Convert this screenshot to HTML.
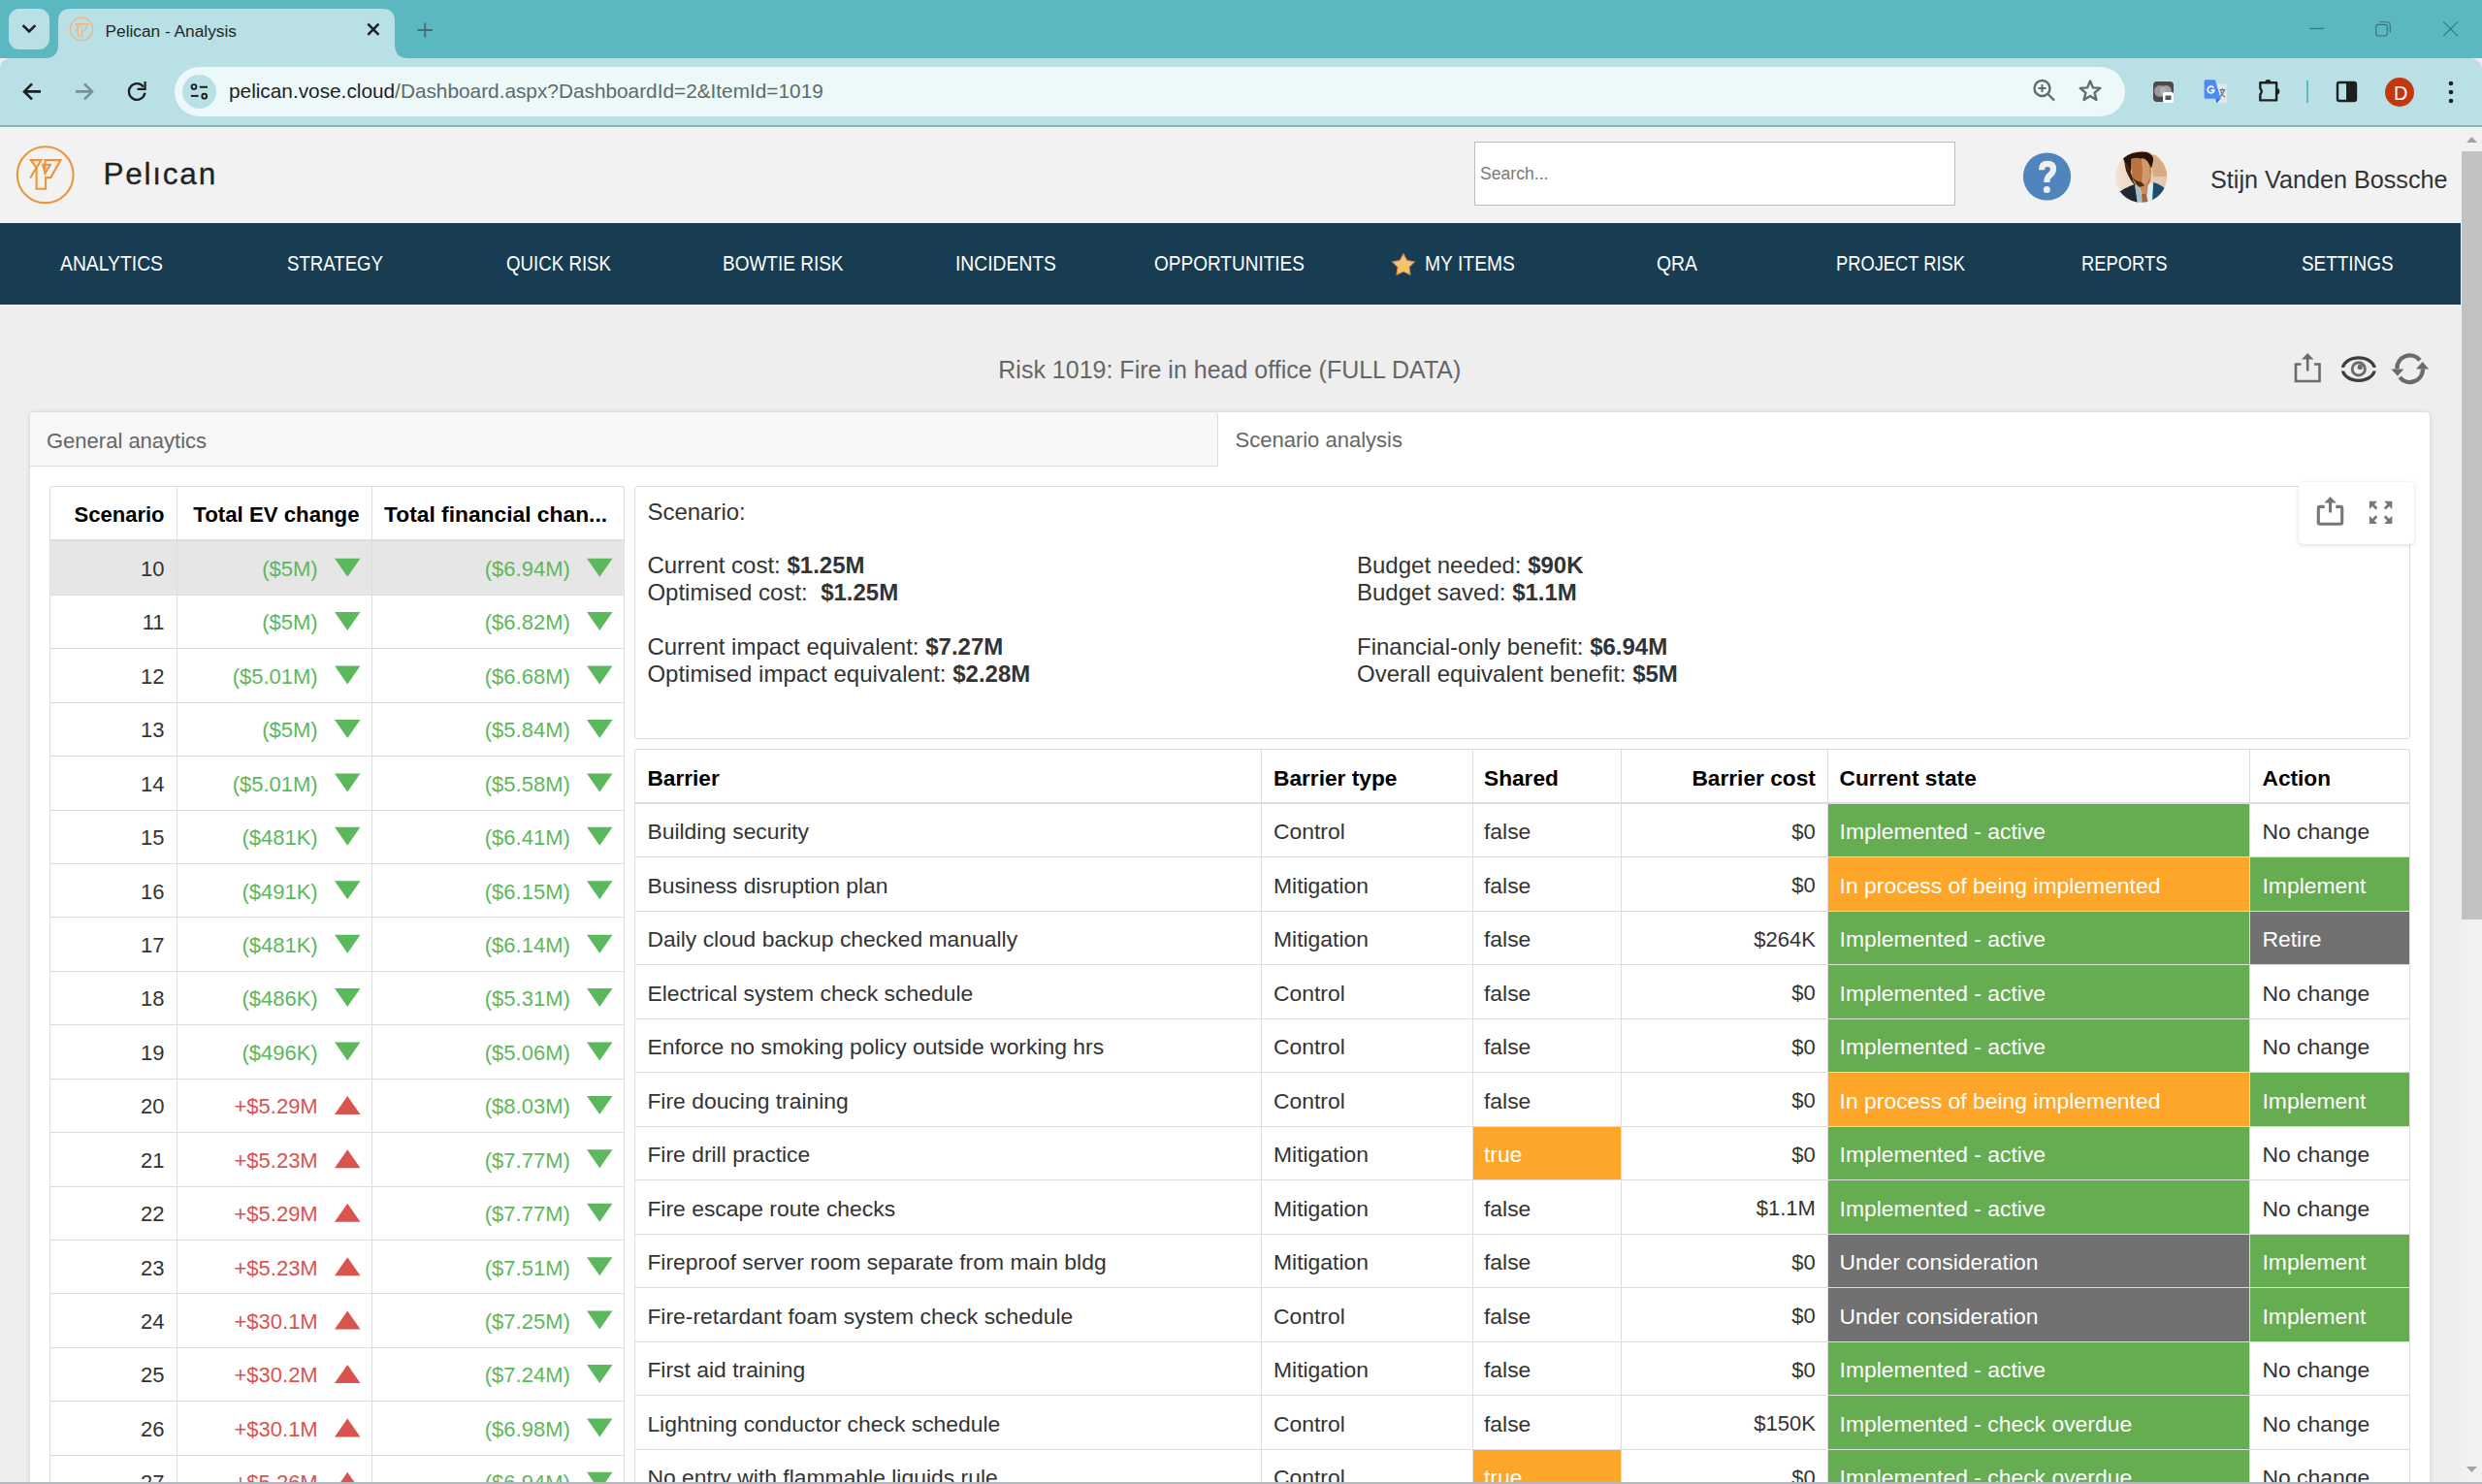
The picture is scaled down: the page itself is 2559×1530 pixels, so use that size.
<!DOCTYPE html>
<html><head><meta charset="utf-8">
<style>
*{box-sizing:border-box;margin:0;padding:0}
html,body{width:2559px;height:1530px;overflow:hidden;background:#eeeeee;font-family:"Liberation Sans",sans-serif;position:relative}
.a{position:absolute}
.t{position:absolute;white-space:pre;line-height:1}
#frame{left:0;top:0;width:2559px;height:60px;background:#5bb8c1}
#toolbar{left:0;top:60px;width:2559px;height:69px;background:#b9e1e5;border-radius:10px 12px 0 0}
#tbborder{left:0;top:129px;width:2559px;height:2px;background:#8fb1b4}
#omni{left:180px;top:69px;width:2011px;height:51px;background:#edf8f8;border-radius:26px}
#header{left:0;top:131px;width:2537px;height:99px;background:#f2f2f2}
#nav{left:0;top:230px;width:2537px;height:84px;background:#183d52}
.nav{color:#fff;font-size:21px;top:262px;transform-origin:0 0}
#sbar{left:2537px;top:131px;width:22px;height:1397px;background:#f1f1f1}
#thumb{left:2538px;top:156px;width:21px;height:792px;background:#c1c1c1}
#bottomline{left:0;top:1528px;width:2559px;height:2px;background:#a3adb0}
</style></head><body>
<div class="a" id="frame"></div>
<!-- tab search button -->
<div class="a" style="left:9px;top:9px;width:42px;height:42px;border-radius:11px;background:#b9e1e5"></div>
<svg class="a" style="left:0;top:0" width="460" height="62">
  <path d="M24.5 27 L30 32.5 L35.5 27" fill="none" stroke="#1f1f1f" stroke-width="2.6" stroke-linecap="square"/>
  <path d="M46 60 Q60 60 60 46 L60 22 Q60 9 73 9 L394 9 Q407 9 407 22 L407 46 Q407 60 421 60 Z" fill="#b9e1e5"/>
  <path d="M379.3 24.6 L390.5 35.8 M390.5 24.6 L379.3 35.8" stroke="#1f1f1f" stroke-width="2.5"/>
  <path d="M438.2 23.4 L438.2 38.6 M430.6 31 L445.8 31" stroke="#3f6e74" stroke-width="1.9"/>
</svg>
<div class="t" style="left:108.5px;top:24.3px;font-size:17.3px;color:#262626">Pelican - Analysis</div>
<!-- window controls -->
<svg class="a" style="left:2370px;top:15px" width="180" height="30">
  <path d="M11 14.4 L26 14.4" stroke="#3a7177" stroke-width="1.1"/>
  <rect x="79.7" y="10.4" width="11.6" height="11.6" rx="2.4" fill="none" stroke="#3a7177" stroke-width="1.1"/>
  <path d="M83.3 7.7 H90.5 Q94.3 7.7 94.3 11.5 V18.7" fill="none" stroke="#3a7177" stroke-width="1.1"/>
  <path d="M149.2 7.4 L164 22.2 M164 7.4 L149.2 22.2" stroke="#3a7177" stroke-width="1.1"/>
</svg>
<div class="a" id="toolbar"></div>
<div class="a" id="tbborder"></div>
<!-- nav buttons -->
<svg class="a" style="left:0;top:60px" width="180" height="70">
  <path d="M42 34.4 H25 M33 26.4 L25 34.4 L33 42.4" fill="none" stroke="#1f1f1f" stroke-width="2.6"/>
  <path d="M78 34.4 H95 M87 26.4 L95 34.4 L87 42.4" fill="none" stroke="#7b9096" stroke-width="2.6"/>
  <path d="M147.9 29.6 A8.3 8.3 0 1 0 149.4 35.8" fill="none" stroke="#1f1f1f" stroke-width="2.3"/>
  <path d="M142.6 31.8 H149.6 V25" fill="none" stroke="#1f1f1f" stroke-width="2.2" stroke-linecap="square"/>
</svg>
<div class="a" id="omni"></div>
<div class="a" style="left:187.9px;top:76.9px;width:35.3px;height:35.3px;border-radius:18px;background:#b9e1e5"></div>
<svg class="a" style="left:187px;top:76px" width="36" height="36">
  <circle cx="13" cy="13.5" r="2.4" fill="none" stroke="#1f1f1f" stroke-width="1.9"/>
  <path d="M18.8 13.75 H27" stroke="#1f1f1f" stroke-width="2"/>
  <circle cx="23.7" cy="23.2" r="2.4" fill="none" stroke="#1f1f1f" stroke-width="1.9"/>
  <path d="M9.9 22.9 H17.6" stroke="#1f1f1f" stroke-width="2"/>
</svg>
<div class="t" style="left:236px;top:84px;font-size:20.8px;color:#1f1f1f">pelican.vose.cloud<span style="color:#5a6b6e">/Dashboard.aspx?DashboardId=2&amp;ItemId=1019</span></div>

<!-- tab favicon -->
<svg class="a" style="left:70px;top:16px" width="28" height="28">
<g fill="none" stroke="#f0b27a" stroke-width="1.2">
<circle cx="14" cy="14" r="11.6"/>
<path d="M8 8.5 H12.5 L10.3 11.8 Z M10.3 11.8 L7.5 16.5 M10.3 11.8 V21 H14.5 V16 H16.6 L21 8.5 H14 V14.5"/>
</g></svg>
<!-- omnibox right icons -->
<svg class="a" style="left:2090px;top:76px" width="90" height="36">
<g fill="none" stroke="#5f6b6d" stroke-width="2.4">
<circle cx="15.5" cy="15" r="8"/>
<path d="M21.5 21 L28 27.5"/>
<path d="M15.5 11 V19 M11.5 15 H19.5" stroke-width="2"/>
<path d="M65 7.5 L67.9 14.4 L75.3 14.9 L69.6 19.6 L71.4 26.9 L65 22.9 L58.6 26.9 L60.4 19.6 L54.7 14.9 L62.1 14.4 Z" stroke-linejoin="round"/>
</g></svg>
<!-- extensions -->
<svg class="a" style="left:2210px;top:74px" width="350" height="42">
<rect x="10" y="10" width="21" height="21" rx="4" fill="#4a4a4a"/>
<circle cx="17" cy="20" r="6" fill="#9a9a9a"/><circle cx="23" cy="20" r="6" fill="#b5b5b5" opacity="0.8"/>
<rect x="20" y="21" width="11" height="11" rx="2" fill="#fff"/>
<path d="M22.5 24.5 H28.5 V29 H22.5 Z" fill="#555"/>
<rect x="75.6" y="12.8" width="10.3" height="19.5" rx="1" fill="#e6e6e6"/>
<path d="M64.2 8.3 H73.9 L79.7 27.8 H64.2 Q62.6 27.8 62.6 26.2 V9.9 Q62.6 8.3 64.2 8.3 Z" fill="#4c8bf5"/>
<path d="M74.2 27.5 L79.7 27.5 L75.3 32.6 Z" fill="#3a6fd8"/>
<path d="M72.4 16.6 A3.4 3.4 0 1 0 72.9 19.1 H69.6" fill="none" stroke="#fff" stroke-width="1.7"/>
<path d="M78.6 18.6 H84.2 M81.4 17.2 V18.6 M79.6 18.8 Q81 24 84 26 M83.2 18.8 Q81.6 24 78.6 26" fill="none" stroke="#5b7b8a" stroke-width="1.2"/>
<path d="M120.3 11.2 H137.1 V29.4 H120.3 V23.5 Q123.2 20.3 120.3 17 Z" fill="none" stroke="#1f1f1f" stroke-width="2.4" stroke-linejoin="round"/>
<path d="M125.3 11.2 A3.1 3.1 0 0 1 131.5 11.2 Z" fill="#1f1f1f"/>
<path d="M137.1 17.1 A3.2 3.2 0 0 1 137.1 23.5 Z" fill="#1f1f1f"/>
<rect x="168" y="9" width="2" height="23" fill="#5db8c2"/>
<rect x="200" y="11" width="19" height="19" rx="2" fill="none" stroke="#1f1f1f" stroke-width="2.4"/>
<rect x="209" y="11" width="10" height="19" fill="#1f1f1f"/>
<circle cx="264" cy="21" r="15" fill="#c5380f"/>
<text x="258" y="28.5" font-family="Liberation Sans" font-size="20" fill="#fff">D</text>
<circle cx="317" cy="12" r="2.3" fill="#1f1f1f"/><circle cx="317" cy="21" r="2.3" fill="#1f1f1f"/><circle cx="317" cy="30" r="2.3" fill="#1f1f1f"/>
</svg>
<div class="a" id="header"></div>
<div class="a" id="nav"></div>

<svg class="a" style="left:0;top:131px" width="240" height="99">
<g fill="none" stroke="#e8963c" stroke-width="2.1" stroke-linejoin="miter">
<circle cx="46.7" cy="49.2" r="28.9"/>
<path d="M31.8 34.1 H42.5 L37.6 41.9 Z"/>
<path d="M37.6 41.9 L31.1 52.6"/>
<path d="M37.6 41.9 V63.7 H47.1 V52.1 H52.3 L62.5 34.1 H46.5 V48"/>
<path d="M44.2 38.8 H51.8 L46.5 47.7 Z"/>
</g></svg>
<div class="t" style="top:164.33px;font-size:31.5px;color:#222;left:106.60px;letter-spacing:1.75px;-webkit-text-stroke:0.3px #222;">Pelıcan</div>
<div class="a" style="left:1520px;top:146px;width:496px;height:66px;background:#fff;border:1.5px solid #bcbcbc;"></div>
<div class="t" style="top:171.10px;font-size:17.6px;color:#7a7a7a;left:1526.00px;">Search...</div>
<svg class="a" style="left:2080px;top:152px" width="60" height="60">
<circle cx="30.5" cy="30" r="24.6" fill="#4f84bd"/>
<path d="M25 23.2 Q25 16.9 31 16.9 Q37 16.9 37 22.3 Q37 26 33.6 28.5 Q30.3 30.8 30.3 36" fill="none" stroke="#f0f0f0" stroke-width="6.1" stroke-linecap="butt"/>
<circle cx="30.3" cy="43.4" r="3.5" fill="#f0f0f0"/>
</svg>
<svg class="a" style="left:2178px;top:152px" width="60" height="60">
<defs><clipPath id="avc"><circle cx="29.6" cy="30.2" r="26.6"/></clipPath>
<linearGradient id="avbg" x1="0" y1="0" x2="1" y2="0"><stop offset="0" stop-color="#f4e6da"/><stop offset="0.45" stop-color="#ecd3bf"/><stop offset="1" stop-color="#e6c2a4"/></linearGradient></defs>
<g clip-path="url(#avc)">
<rect width="60" height="60" fill="url(#avbg)"/>
<path d="M40 8 L60 8 L60 30 L42 30 Z" fill="#d8ab84"/>
<path d="M11 11 Q22 3 36 5 Q43 8 42 14 L40 22 L38 18 Q30 9 20 12 L19 26 Q16 20 12 14 Z" fill="#2a1409"/>
<path d="M19 12 Q30 8 38 18 L40 24 L39 34 Q37 40 33 42 L26 41 Q22 36 20 30 Z" fill="#b8733f"/>
<path d="M30 11 Q36 12 38 18 L39 30 Q36 38 33 40 L30 38 L31 24 Z" fill="#d29a6e"/>
<path d="M12 14 Q16 20 19 26 L22 36 L26 41 L24 40 Q18 34 14 24 Z" fill="#3c200c"/>
<path d="M20 30 Q24 38 28 41 L34 40 L30 36 L24 34 Z" fill="#4c2c12"/>
<path d="M28 41 L37 38 L36 48 L31 50 Z" fill="#c88a5a"/>
<path d="M0 52 Q10 42 23 38 L27 60 L0 60 Z" fill="#1f2833"/>
<path d="M42 36 Q50 38 56 44 L60 60 L40 60 Z" fill="#1a4d6b"/>
<path d="M23 38 L28 41 L32 60 L26 60 Z" fill="#9fc0d2"/>
<path d="M37 38 L42 36 L41 56 L35 54 Z" fill="#d9eef4"/>
<path d="M30 48 L35 48 L37 60 L31 60 Z" fill="#a9642f"/>
</g></svg>
<div class="t" style="top:173.16px;font-size:25.2px;color:#333;left:2279.00px;">Stijn Vanden Bossche</div>
<div class="t" style="top:260.67px;font-size:22px;color:#fff;left:62.00px;transform:scaleX(0.8786);transform-origin:0 0;">ANALYTICS</div>
<div class="t" style="top:260.67px;font-size:22px;color:#fff;left:296.00px;transform:scaleX(0.8466);transform-origin:0 0;">STRATEGY</div>
<div class="t" style="top:260.67px;font-size:22px;color:#fff;left:522.00px;transform:scaleX(0.8495);transform-origin:0 0;">QUICK RISK</div>
<div class="t" style="top:260.67px;font-size:22px;color:#fff;left:745.00px;transform:scaleX(0.8631);transform-origin:0 0;">BOWTIE RISK</div>
<div class="t" style="top:260.67px;font-size:22px;color:#fff;left:985.00px;transform:scaleX(0.8771);transform-origin:0 0;">INCIDENTS</div>
<div class="t" style="top:260.67px;font-size:22px;color:#fff;left:1190.00px;transform:scaleX(0.8645);transform-origin:0 0;">OPPORTUNITIES</div>
<div class="t" style="top:260.67px;font-size:22px;color:#fff;left:1469.00px;transform:scaleX(0.8779);transform-origin:0 0;">MY ITEMS</div>
<div class="t" style="top:260.67px;font-size:22px;color:#fff;left:1708.00px;transform:scaleX(0.8808);transform-origin:0 0;">QRA</div>
<div class="t" style="top:260.67px;font-size:22px;color:#fff;left:1893.00px;transform:scaleX(0.8326);transform-origin:0 0;">PROJECT RISK</div>
<div class="t" style="top:260.67px;font-size:22px;color:#fff;left:2145.50px;transform:scaleX(0.8352);transform-origin:0 0;">REPORTS</div>
<div class="t" style="top:260.67px;font-size:22px;color:#fff;left:2373.00px;transform:scaleX(0.8599);transform-origin:0 0;">SETTINGS</div>
<svg class="a" style="left:1434px;top:260px" width="26" height="28">
<defs><radialGradient id="stg" cx="0.5" cy="0.6" r="0.6"><stop offset="0" stop-color="#f7c44a"/><stop offset="0.55" stop-color="#f1c385"/><stop offset="1" stop-color="#e8a060"/></radialGradient></defs>
<path d="M13.00 1.40 L16.70 8.50 L24.60 9.83 L18.99 15.55 L20.17 23.47 L13.00 19.90 L5.83 23.47 L7.01 15.55 L1.40 9.83 L9.30 8.50 Z" fill="url(#stg)" stroke="#d4843c" stroke-width="1" stroke-linejoin="round"/>
</svg>
<div class="t" style="top:368.83px;font-size:25px;color:#666;left:1029.30px;">Risk 1019: Fire in head office (FULL DATA)</div>
<svg class="a" style="left:2360px;top:360px" width="150" height="40">
<g fill="none" stroke="#6b6b6b" stroke-width="2.6">
<path d="M12.5 15.5 H7 V33 H31.5 V15.5 H26"/>
<path d="M19.2 7 V22.5"/>
</g>
<path d="M13 10.5 L19.2 4 L25.4 10.5 Z" fill="#6b6b6b"/>
<ellipse cx="71.8" cy="20.6" rx="16.5" ry="11.7" fill="none" stroke="#3d3d42" stroke-width="3.3"/>
<rect x="52" y="18.9" width="6" height="3.6" fill="#eeeeee"/>
<rect x="85.6" y="18.9" width="6" height="3.6" fill="#eeeeee"/>
<circle cx="71.8" cy="20.4" r="6.6" fill="none" stroke="#6b6b6b" stroke-width="2.9"/>
<circle cx="73.2" cy="18.4" r="2.6" fill="#6b6b6b"/>
<g fill="none" stroke="#6b6b6b" stroke-width="4.4">
<path d="M135 11.3 A13.3 13.3 0 0 0 111.4 20.4"/>
<path d="M114.2 28.8 A13.3 13.3 0 0 0 138 20.4"/>
</g>
<path d="M105.3 20.4 L118.3 20.4 L112 27.8 Z" fill="#6b6b6b"/>
<path d="M144.3 20.4 L131 20.4 L137.6 13 Z" fill="#6b6b6b"/>
</svg>
<div class="a" style="left:31px;top:425px;width:2474px;height:1110px;background:#fff;border-radius:4px 4px 0 0;box-shadow:0 0 5px rgba(0,0,0,0.13)"></div>
<div class="a" style="left:31px;top:425px;width:1225px;height:56px;background:#f7f7f7;border-right:1px solid #dcdcdc;border-bottom:1px solid #dcdcdc;border-radius:4px 3px 0 0;"></div>
<div class="t" style="top:443.77px;font-size:22px;color:#666;left:48.00px;">General anaytics</div>
<div class="t" style="top:443.37px;font-size:22px;color:#666;left:1273.50px;">Scenario analysis</div>
<div class="a" style="left:51px;top:501px;width:593px;height:1100px;border:1px solid #dddddd;border-bottom:none;border-radius:3px 3px 0 0"></div>
<div class="a" style="left:52px;top:557.5px;width:591px;height:55.42px;background:#e6e6e6;"></div>
<div class="a" style="left:51px;top:556px;width:593px;height:2px;background:#dddddd;"></div>
<div class="a" style="left:182px;top:501px;width:1px;height:1100px;background:#dddddd;"></div>
<div class="a" style="left:383px;top:501px;width:1px;height:1100px;background:#dddddd;"></div>
<div class="a" style="left:51px;top:612.92px;width:593px;height:1px;background:#dddddd"></div>
<div class="a" style="left:51px;top:668.34px;width:593px;height:1px;background:#dddddd"></div>
<div class="a" style="left:51px;top:723.76px;width:593px;height:1px;background:#dddddd"></div>
<div class="a" style="left:51px;top:779.18px;width:593px;height:1px;background:#dddddd"></div>
<div class="a" style="left:51px;top:834.60px;width:593px;height:1px;background:#dddddd"></div>
<div class="a" style="left:51px;top:890.02px;width:593px;height:1px;background:#dddddd"></div>
<div class="a" style="left:51px;top:945.44px;width:593px;height:1px;background:#dddddd"></div>
<div class="a" style="left:51px;top:1000.86px;width:593px;height:1px;background:#dddddd"></div>
<div class="a" style="left:51px;top:1056.28px;width:593px;height:1px;background:#dddddd"></div>
<div class="a" style="left:51px;top:1111.70px;width:593px;height:1px;background:#dddddd"></div>
<div class="a" style="left:51px;top:1167.12px;width:593px;height:1px;background:#dddddd"></div>
<div class="a" style="left:51px;top:1222.54px;width:593px;height:1px;background:#dddddd"></div>
<div class="a" style="left:51px;top:1277.96px;width:593px;height:1px;background:#dddddd"></div>
<div class="a" style="left:51px;top:1333.38px;width:593px;height:1px;background:#dddddd"></div>
<div class="a" style="left:51px;top:1388.80px;width:593px;height:1px;background:#dddddd"></div>
<div class="a" style="left:51px;top:1444.22px;width:593px;height:1px;background:#dddddd"></div>
<div class="a" style="left:51px;top:1499.64px;width:593px;height:1px;background:#dddddd"></div>
<div class="a" style="left:51px;top:1555.06px;width:593px;height:1px;background:#dddddd"></div>
<div class="t" style="top:520.37px;font-size:22px;color:#000;font-weight:bold;right:2389.50px;">Scenario</div>
<div class="t" style="top:520.37px;font-size:22px;color:#000;font-weight:bold;right:2188.00px;transform:scaleX(1.01);transform-origin:100% 0;">Total EV change</div>
<div class="t" style="top:520.37px;font-size:22px;color:#000;font-weight:bold;left:396.00px;transform:scaleX(1.036);transform-origin:0 0;">Total financial chan...</div>
<div class="t" style="top:576.07px;font-size:22px;color:#333;right:2389.50px;">10</div>
<div class="t" style="top:576.07px;font-size:22px;color:#5cb85c;right:2231.30px;">($5M)</div>
<div class="t" style="top:576.07px;font-size:22px;color:#5cb85c;right:1971.20px;">($6.94M)</div>
<div class="t" style="top:631.49px;font-size:22px;color:#333;right:2389.50px;">11</div>
<div class="t" style="top:631.49px;font-size:22px;color:#5cb85c;right:2231.30px;">($5M)</div>
<div class="t" style="top:631.49px;font-size:22px;color:#5cb85c;right:1971.20px;">($6.82M)</div>
<div class="t" style="top:686.91px;font-size:22px;color:#333;right:2389.50px;">12</div>
<div class="t" style="top:686.91px;font-size:22px;color:#5cb85c;right:2231.30px;">($5.01M)</div>
<div class="t" style="top:686.91px;font-size:22px;color:#5cb85c;right:1971.20px;">($6.68M)</div>
<div class="t" style="top:742.33px;font-size:22px;color:#333;right:2389.50px;">13</div>
<div class="t" style="top:742.33px;font-size:22px;color:#5cb85c;right:2231.30px;">($5M)</div>
<div class="t" style="top:742.33px;font-size:22px;color:#5cb85c;right:1971.20px;">($5.84M)</div>
<div class="t" style="top:797.75px;font-size:22px;color:#333;right:2389.50px;">14</div>
<div class="t" style="top:797.75px;font-size:22px;color:#5cb85c;right:2231.30px;">($5.01M)</div>
<div class="t" style="top:797.75px;font-size:22px;color:#5cb85c;right:1971.20px;">($5.58M)</div>
<div class="t" style="top:853.17px;font-size:22px;color:#333;right:2389.50px;">15</div>
<div class="t" style="top:853.17px;font-size:22px;color:#5cb85c;right:2231.30px;">($481K)</div>
<div class="t" style="top:853.17px;font-size:22px;color:#5cb85c;right:1971.20px;">($6.41M)</div>
<div class="t" style="top:908.59px;font-size:22px;color:#333;right:2389.50px;">16</div>
<div class="t" style="top:908.59px;font-size:22px;color:#5cb85c;right:2231.30px;">($491K)</div>
<div class="t" style="top:908.59px;font-size:22px;color:#5cb85c;right:1971.20px;">($6.15M)</div>
<div class="t" style="top:964.01px;font-size:22px;color:#333;right:2389.50px;">17</div>
<div class="t" style="top:964.01px;font-size:22px;color:#5cb85c;right:2231.30px;">($481K)</div>
<div class="t" style="top:964.01px;font-size:22px;color:#5cb85c;right:1971.20px;">($6.14M)</div>
<div class="t" style="top:1019.43px;font-size:22px;color:#333;right:2389.50px;">18</div>
<div class="t" style="top:1019.43px;font-size:22px;color:#5cb85c;right:2231.30px;">($486K)</div>
<div class="t" style="top:1019.43px;font-size:22px;color:#5cb85c;right:1971.20px;">($5.31M)</div>
<div class="t" style="top:1074.85px;font-size:22px;color:#333;right:2389.50px;">19</div>
<div class="t" style="top:1074.85px;font-size:22px;color:#5cb85c;right:2231.30px;">($496K)</div>
<div class="t" style="top:1074.85px;font-size:22px;color:#5cb85c;right:1971.20px;">($5.06M)</div>
<div class="t" style="top:1130.27px;font-size:22px;color:#333;right:2389.50px;">20</div>
<div class="t" style="top:1130.27px;font-size:22px;color:#d9534f;right:2231.30px;">+$5.29M</div>
<div class="t" style="top:1130.27px;font-size:22px;color:#5cb85c;right:1971.20px;">($8.03M)</div>
<div class="t" style="top:1185.69px;font-size:22px;color:#333;right:2389.50px;">21</div>
<div class="t" style="top:1185.69px;font-size:22px;color:#d9534f;right:2231.30px;">+$5.23M</div>
<div class="t" style="top:1185.69px;font-size:22px;color:#5cb85c;right:1971.20px;">($7.77M)</div>
<div class="t" style="top:1241.11px;font-size:22px;color:#333;right:2389.50px;">22</div>
<div class="t" style="top:1241.11px;font-size:22px;color:#d9534f;right:2231.30px;">+$5.29M</div>
<div class="t" style="top:1241.11px;font-size:22px;color:#5cb85c;right:1971.20px;">($7.77M)</div>
<div class="t" style="top:1296.53px;font-size:22px;color:#333;right:2389.50px;">23</div>
<div class="t" style="top:1296.53px;font-size:22px;color:#d9534f;right:2231.30px;">+$5.23M</div>
<div class="t" style="top:1296.53px;font-size:22px;color:#5cb85c;right:1971.20px;">($7.51M)</div>
<div class="t" style="top:1351.95px;font-size:22px;color:#333;right:2389.50px;">24</div>
<div class="t" style="top:1351.95px;font-size:22px;color:#d9534f;right:2231.30px;">+$30.1M</div>
<div class="t" style="top:1351.95px;font-size:22px;color:#5cb85c;right:1971.20px;">($7.25M)</div>
<div class="t" style="top:1407.37px;font-size:22px;color:#333;right:2389.50px;">25</div>
<div class="t" style="top:1407.37px;font-size:22px;color:#d9534f;right:2231.30px;">+$30.2M</div>
<div class="t" style="top:1407.37px;font-size:22px;color:#5cb85c;right:1971.20px;">($7.24M)</div>
<div class="t" style="top:1462.79px;font-size:22px;color:#333;right:2389.50px;">26</div>
<div class="t" style="top:1462.79px;font-size:22px;color:#d9534f;right:2231.30px;">+$30.1M</div>
<div class="t" style="top:1462.79px;font-size:22px;color:#5cb85c;right:1971.20px;">($6.98M)</div>
<div class="t" style="top:1518.21px;font-size:22px;color:#333;right:2389.50px;">27</div>
<div class="t" style="top:1518.21px;font-size:22px;color:#d9534f;right:2231.30px;">+$5.26M</div>
<div class="t" style="top:1518.21px;font-size:22px;color:#5cb85c;right:1971.20px;">($6.94M)</div>
<svg class="a" style="left:0;top:0" width="700" height="1530"><path d="M345 575.70 L371.5 575.70 L358.25 594.70 Z" fill="#5cb85c"/><path d="M605 575.70 L631.5 575.70 L618.25 594.70 Z" fill="#5cb85c"/><path d="M345 631.12 L371.5 631.12 L358.25 650.12 Z" fill="#5cb85c"/><path d="M605 631.12 L631.5 631.12 L618.25 650.12 Z" fill="#5cb85c"/><path d="M345 686.54 L371.5 686.54 L358.25 705.54 Z" fill="#5cb85c"/><path d="M605 686.54 L631.5 686.54 L618.25 705.54 Z" fill="#5cb85c"/><path d="M345 741.96 L371.5 741.96 L358.25 760.96 Z" fill="#5cb85c"/><path d="M605 741.96 L631.5 741.96 L618.25 760.96 Z" fill="#5cb85c"/><path d="M345 797.38 L371.5 797.38 L358.25 816.38 Z" fill="#5cb85c"/><path d="M605 797.38 L631.5 797.38 L618.25 816.38 Z" fill="#5cb85c"/><path d="M345 852.80 L371.5 852.80 L358.25 871.80 Z" fill="#5cb85c"/><path d="M605 852.80 L631.5 852.80 L618.25 871.80 Z" fill="#5cb85c"/><path d="M345 908.22 L371.5 908.22 L358.25 927.22 Z" fill="#5cb85c"/><path d="M605 908.22 L631.5 908.22 L618.25 927.22 Z" fill="#5cb85c"/><path d="M345 963.64 L371.5 963.64 L358.25 982.64 Z" fill="#5cb85c"/><path d="M605 963.64 L631.5 963.64 L618.25 982.64 Z" fill="#5cb85c"/><path d="M345 1019.06 L371.5 1019.06 L358.25 1038.06 Z" fill="#5cb85c"/><path d="M605 1019.06 L631.5 1019.06 L618.25 1038.06 Z" fill="#5cb85c"/><path d="M345 1074.48 L371.5 1074.48 L358.25 1093.48 Z" fill="#5cb85c"/><path d="M605 1074.48 L631.5 1074.48 L618.25 1093.48 Z" fill="#5cb85c"/><path d="M345 1148.90 L371.5 1148.90 L358.25 1129.90 Z" fill="#d9534f"/><path d="M605 1129.90 L631.5 1129.90 L618.25 1148.90 Z" fill="#5cb85c"/><path d="M345 1204.32 L371.5 1204.32 L358.25 1185.32 Z" fill="#d9534f"/><path d="M605 1185.32 L631.5 1185.32 L618.25 1204.32 Z" fill="#5cb85c"/><path d="M345 1259.74 L371.5 1259.74 L358.25 1240.74 Z" fill="#d9534f"/><path d="M605 1240.74 L631.5 1240.74 L618.25 1259.74 Z" fill="#5cb85c"/><path d="M345 1315.16 L371.5 1315.16 L358.25 1296.16 Z" fill="#d9534f"/><path d="M605 1296.16 L631.5 1296.16 L618.25 1315.16 Z" fill="#5cb85c"/><path d="M345 1370.58 L371.5 1370.58 L358.25 1351.58 Z" fill="#d9534f"/><path d="M605 1351.58 L631.5 1351.58 L618.25 1370.58 Z" fill="#5cb85c"/><path d="M345 1426.00 L371.5 1426.00 L358.25 1407.00 Z" fill="#d9534f"/><path d="M605 1407.00 L631.5 1407.00 L618.25 1426.00 Z" fill="#5cb85c"/><path d="M345 1481.42 L371.5 1481.42 L358.25 1462.42 Z" fill="#d9534f"/><path d="M605 1462.42 L631.5 1462.42 L618.25 1481.42 Z" fill="#5cb85c"/><path d="M345 1536.84 L371.5 1536.84 L358.25 1517.84 Z" fill="#d9534f"/><path d="M605 1517.84 L631.5 1517.84 L618.25 1536.84 Z" fill="#5cb85c"/></svg>
<div class="a" style="left:654px;top:501px;width:1831px;height:261px;border:1px solid #dddddd;border-radius:3px"></div>
<div class="t" style="top:515.88px;font-size:24px;color:#333;left:667.40px;">Scenario:</div>
<div class="t" style="top:571.48px;font-size:24px;color:#333;left:667.40px;">Current cost: <b>$1.25M</b></div>
<div class="t" style="top:599.48px;font-size:24px;color:#333;left:667.40px;">Optimised cost:  <b>$1.25M</b></div>
<div class="t" style="top:655.28px;font-size:24px;color:#333;left:667.40px;">Current impact equivalent: <b>$7.27M</b></div>
<div class="t" style="top:683.28px;font-size:24px;color:#333;left:667.40px;">Optimised impact equivalent: <b>$2.28M</b></div>
<div class="t" style="top:571.48px;font-size:24px;color:#333;left:1399.00px;">Budget needed: <b>$90K</b></div>
<div class="t" style="top:599.48px;font-size:24px;color:#333;left:1399.00px;">Budget saved: <b>$1.1M</b></div>
<div class="t" style="top:655.28px;font-size:24px;color:#333;left:1399.00px;">Financial-only benefit: <b>$6.94M</b></div>
<div class="t" style="top:683.28px;font-size:24px;color:#333;left:1399.00px;">Overall equivalent benefit: <b>$5M</b></div>
<div class="a" style="left:2370px;top:497px;width:119px;height:64px;background:#fff;border-radius:5px;box-shadow:0 1px 4px rgba(0,0,0,0.15)"></div>
<svg class="a" style="left:2370px;top:497px" width="119" height="64">
<path d="M26.7 25.4 H22 Q20.3 25.4 20.3 27.1 V41.6 Q20.3 43.3 22 43.3 H43 Q44.7 43.3 44.7 41.6 V27.1 Q44.7 25.4 43 25.4 H38.3" fill="none" stroke="#777" stroke-width="3.1"/>
<path d="M32.6 20.5 V31.5" fill="none" stroke="#777" stroke-width="3.1"/>
<path d="M26.4 21.5 L32.6 15 L38.8 21.5 Z" fill="#777"/>
<g fill="#777">
<path d="M72.9 19.8 H81.1 L72.9 28 Z"/><path d="M96.3 19.8 H88.1 L96.3 28 Z"/>
<path d="M72.9 42.9 H81.1 L72.9 34.7 Z"/><path d="M96.3 42.9 H88.1 L96.3 34.7 Z"/>
</g>
<g stroke="#777" stroke-width="2.8" fill="none">
<path d="M76 23 L80.4 27.4 M93.2 23 L88.8 27.4 M76 39.7 L80.4 35.3 M93.2 39.7 L88.8 35.3"/>
</g>
</svg>
<div class="a" style="left:654px;top:772px;width:1831px;height:800px;border:1px solid #dddddd;border-bottom:none;border-radius:3px 3px 0 0"></div>
<div class="a" style="left:1885px;top:828.60px;width:434px;height:54.50px;background:#66ac50"></div>
<div class="a" style="left:1885px;top:884.10px;width:434px;height:54.50px;background:#fea629"></div>
<div class="a" style="left:2320px;top:884.10px;width:164px;height:54.50px;background:#66ac50"></div>
<div class="a" style="left:1885px;top:939.60px;width:434px;height:54.50px;background:#66ac50"></div>
<div class="a" style="left:2320px;top:939.60px;width:164px;height:54.50px;background:#717171"></div>
<div class="a" style="left:1885px;top:995.10px;width:434px;height:54.50px;background:#66ac50"></div>
<div class="a" style="left:1885px;top:1050.60px;width:434px;height:54.50px;background:#66ac50"></div>
<div class="a" style="left:1885px;top:1106.10px;width:434px;height:54.50px;background:#fea629"></div>
<div class="a" style="left:2320px;top:1106.10px;width:164px;height:54.50px;background:#66ac50"></div>
<div class="a" style="left:1519px;top:1161.60px;width:152px;height:54.50px;background:#fea629"></div>
<div class="a" style="left:1885px;top:1161.60px;width:434px;height:54.50px;background:#66ac50"></div>
<div class="a" style="left:1885px;top:1217.10px;width:434px;height:54.50px;background:#66ac50"></div>
<div class="a" style="left:1885px;top:1272.60px;width:434px;height:54.50px;background:#717171"></div>
<div class="a" style="left:2320px;top:1272.60px;width:164px;height:54.50px;background:#66ac50"></div>
<div class="a" style="left:1885px;top:1328.10px;width:434px;height:54.50px;background:#717171"></div>
<div class="a" style="left:2320px;top:1328.10px;width:164px;height:54.50px;background:#66ac50"></div>
<div class="a" style="left:1885px;top:1383.60px;width:434px;height:54.50px;background:#66ac50"></div>
<div class="a" style="left:1885px;top:1439.10px;width:434px;height:54.50px;background:#66ac50"></div>
<div class="a" style="left:1519px;top:1494.60px;width:152px;height:54.50px;background:#fea629"></div>
<div class="a" style="left:1885px;top:1494.60px;width:434px;height:54.50px;background:#66ac50"></div>
<div class="a" style="left:654px;top:826.5px;width:1831px;height:2px;background:#dddddd;"></div>
<div class="a" style="left:1300px;top:772px;width:1px;height:800px;background:#dddddd;"></div>
<div class="a" style="left:1518px;top:772px;width:1px;height:800px;background:#dddddd;"></div>
<div class="a" style="left:1671px;top:772px;width:1px;height:800px;background:#dddddd;"></div>
<div class="a" style="left:1884px;top:772px;width:1px;height:800px;background:#dddddd;"></div>
<div class="a" style="left:2319px;top:772px;width:1px;height:800px;background:#dddddd;"></div>
<div class="a" style="left:654px;top:883.10px;width:1831px;height:1px;background:#dddddd"></div>
<div class="a" style="left:654px;top:938.60px;width:1831px;height:1px;background:#dddddd"></div>
<div class="a" style="left:654px;top:994.10px;width:1831px;height:1px;background:#dddddd"></div>
<div class="a" style="left:654px;top:1049.60px;width:1831px;height:1px;background:#dddddd"></div>
<div class="a" style="left:654px;top:1105.10px;width:1831px;height:1px;background:#dddddd"></div>
<div class="a" style="left:654px;top:1160.60px;width:1831px;height:1px;background:#dddddd"></div>
<div class="a" style="left:654px;top:1216.10px;width:1831px;height:1px;background:#dddddd"></div>
<div class="a" style="left:654px;top:1271.60px;width:1831px;height:1px;background:#dddddd"></div>
<div class="a" style="left:654px;top:1327.10px;width:1831px;height:1px;background:#dddddd"></div>
<div class="a" style="left:654px;top:1382.60px;width:1831px;height:1px;background:#dddddd"></div>
<div class="a" style="left:654px;top:1438.10px;width:1831px;height:1px;background:#dddddd"></div>
<div class="a" style="left:654px;top:1493.60px;width:1831px;height:1px;background:#dddddd"></div>
<div class="a" style="left:654px;top:1549.10px;width:1831px;height:1px;background:#dddddd"></div>
<div class="t" style="top:791.38px;font-size:22.7px;color:#000;font-weight:bold;left:667.40px;">Barrier</div>
<div class="t" style="top:791.38px;font-size:22.7px;color:#000;font-weight:bold;left:1313.00px;">Barrier type</div>
<div class="t" style="top:791.38px;font-size:22.7px;color:#000;font-weight:bold;left:1530.00px;">Shared</div>
<div class="t" style="top:791.38px;font-size:22.7px;color:#000;font-weight:bold;right:687.20px;">Barrier cost</div>
<div class="t" style="top:791.38px;font-size:22.7px;color:#000;font-weight:bold;left:1896.60px;">Current state</div>
<div class="t" style="top:791.38px;font-size:22.7px;color:#000;font-weight:bold;left:2332.50px;">Action</div>
<div class="t" style="top:846.21px;font-size:22.9px;color:#333;left:667.40px;">Building security</div>
<div class="t" style="top:846.21px;font-size:22.9px;color:#333;left:1313.00px;">Control</div>
<div class="t" style="top:846.21px;font-size:22.9px;color:#333;left:1530.00px;">false</div>
<div class="t" style="top:846.97px;font-size:22px;color:#333;right:687.20px;">$0</div>
<div class="t" style="top:846.21px;font-size:22.9px;color:#fff;left:1896.60px;">Implemented - active</div>
<div class="t" style="top:846.21px;font-size:22.9px;color:#333;left:2332.50px;">No change</div>
<div class="t" style="top:901.71px;font-size:22.9px;color:#333;left:667.40px;">Business disruption plan</div>
<div class="t" style="top:901.71px;font-size:22.9px;color:#333;left:1313.00px;">Mitigation</div>
<div class="t" style="top:901.71px;font-size:22.9px;color:#333;left:1530.00px;">false</div>
<div class="t" style="top:902.47px;font-size:22px;color:#333;right:687.20px;">$0</div>
<div class="t" style="top:901.71px;font-size:22.9px;color:#fff;left:1896.60px;">In process of being implemented</div>
<div class="t" style="top:901.71px;font-size:22.9px;color:#fff;left:2332.50px;">Implement</div>
<div class="t" style="top:957.21px;font-size:22.9px;color:#333;left:667.40px;">Daily cloud backup checked manually</div>
<div class="t" style="top:957.21px;font-size:22.9px;color:#333;left:1313.00px;">Mitigation</div>
<div class="t" style="top:957.21px;font-size:22.9px;color:#333;left:1530.00px;">false</div>
<div class="t" style="top:957.97px;font-size:22px;color:#333;right:687.20px;">$264K</div>
<div class="t" style="top:957.21px;font-size:22.9px;color:#fff;left:1896.60px;">Implemented - active</div>
<div class="t" style="top:957.21px;font-size:22.9px;color:#fff;left:2332.50px;">Retire</div>
<div class="t" style="top:1012.71px;font-size:22.9px;color:#333;left:667.40px;">Electrical system check schedule</div>
<div class="t" style="top:1012.71px;font-size:22.9px;color:#333;left:1313.00px;">Control</div>
<div class="t" style="top:1012.71px;font-size:22.9px;color:#333;left:1530.00px;">false</div>
<div class="t" style="top:1013.47px;font-size:22px;color:#333;right:687.20px;">$0</div>
<div class="t" style="top:1012.71px;font-size:22.9px;color:#fff;left:1896.60px;">Implemented - active</div>
<div class="t" style="top:1012.71px;font-size:22.9px;color:#333;left:2332.50px;">No change</div>
<div class="t" style="top:1068.21px;font-size:22.9px;color:#333;left:667.40px;">Enforce no smoking policy outside working hrs</div>
<div class="t" style="top:1068.21px;font-size:22.9px;color:#333;left:1313.00px;">Control</div>
<div class="t" style="top:1068.21px;font-size:22.9px;color:#333;left:1530.00px;">false</div>
<div class="t" style="top:1068.97px;font-size:22px;color:#333;right:687.20px;">$0</div>
<div class="t" style="top:1068.21px;font-size:22.9px;color:#fff;left:1896.60px;">Implemented - active</div>
<div class="t" style="top:1068.21px;font-size:22.9px;color:#333;left:2332.50px;">No change</div>
<div class="t" style="top:1123.71px;font-size:22.9px;color:#333;left:667.40px;">Fire doucing training</div>
<div class="t" style="top:1123.71px;font-size:22.9px;color:#333;left:1313.00px;">Control</div>
<div class="t" style="top:1123.71px;font-size:22.9px;color:#333;left:1530.00px;">false</div>
<div class="t" style="top:1124.47px;font-size:22px;color:#333;right:687.20px;">$0</div>
<div class="t" style="top:1123.71px;font-size:22.9px;color:#fff;left:1896.60px;">In process of being implemented</div>
<div class="t" style="top:1123.71px;font-size:22.9px;color:#fff;left:2332.50px;">Implement</div>
<div class="t" style="top:1179.21px;font-size:22.9px;color:#333;left:667.40px;">Fire drill practice</div>
<div class="t" style="top:1179.21px;font-size:22.9px;color:#333;left:1313.00px;">Mitigation</div>
<div class="t" style="top:1179.21px;font-size:22.9px;color:#fff;left:1530.00px;">true</div>
<div class="t" style="top:1179.97px;font-size:22px;color:#333;right:687.20px;">$0</div>
<div class="t" style="top:1179.21px;font-size:22.9px;color:#fff;left:1896.60px;">Implemented - active</div>
<div class="t" style="top:1179.21px;font-size:22.9px;color:#333;left:2332.50px;">No change</div>
<div class="t" style="top:1234.71px;font-size:22.9px;color:#333;left:667.40px;">Fire escape route checks</div>
<div class="t" style="top:1234.71px;font-size:22.9px;color:#333;left:1313.00px;">Mitigation</div>
<div class="t" style="top:1234.71px;font-size:22.9px;color:#333;left:1530.00px;">false</div>
<div class="t" style="top:1235.47px;font-size:22px;color:#333;right:687.20px;">$1.1M</div>
<div class="t" style="top:1234.71px;font-size:22.9px;color:#fff;left:1896.60px;">Implemented - active</div>
<div class="t" style="top:1234.71px;font-size:22.9px;color:#333;left:2332.50px;">No change</div>
<div class="t" style="top:1290.21px;font-size:22.9px;color:#333;left:667.40px;">Fireproof server room separate from main bldg</div>
<div class="t" style="top:1290.21px;font-size:22.9px;color:#333;left:1313.00px;">Mitigation</div>
<div class="t" style="top:1290.21px;font-size:22.9px;color:#333;left:1530.00px;">false</div>
<div class="t" style="top:1290.97px;font-size:22px;color:#333;right:687.20px;">$0</div>
<div class="t" style="top:1290.21px;font-size:22.9px;color:#fff;left:1896.60px;">Under consideration</div>
<div class="t" style="top:1290.21px;font-size:22.9px;color:#fff;left:2332.50px;">Implement</div>
<div class="t" style="top:1345.71px;font-size:22.9px;color:#333;left:667.40px;">Fire-retardant foam system check schedule</div>
<div class="t" style="top:1345.71px;font-size:22.9px;color:#333;left:1313.00px;">Control</div>
<div class="t" style="top:1345.71px;font-size:22.9px;color:#333;left:1530.00px;">false</div>
<div class="t" style="top:1346.47px;font-size:22px;color:#333;right:687.20px;">$0</div>
<div class="t" style="top:1345.71px;font-size:22.9px;color:#fff;left:1896.60px;">Under consideration</div>
<div class="t" style="top:1345.71px;font-size:22.9px;color:#fff;left:2332.50px;">Implement</div>
<div class="t" style="top:1401.21px;font-size:22.9px;color:#333;left:667.40px;">First aid training</div>
<div class="t" style="top:1401.21px;font-size:22.9px;color:#333;left:1313.00px;">Mitigation</div>
<div class="t" style="top:1401.21px;font-size:22.9px;color:#333;left:1530.00px;">false</div>
<div class="t" style="top:1401.97px;font-size:22px;color:#333;right:687.20px;">$0</div>
<div class="t" style="top:1401.21px;font-size:22.9px;color:#fff;left:1896.60px;">Implemented - active</div>
<div class="t" style="top:1401.21px;font-size:22.9px;color:#333;left:2332.50px;">No change</div>
<div class="t" style="top:1456.71px;font-size:22.9px;color:#333;left:667.40px;">Lightning conductor check schedule</div>
<div class="t" style="top:1456.71px;font-size:22.9px;color:#333;left:1313.00px;">Control</div>
<div class="t" style="top:1456.71px;font-size:22.9px;color:#333;left:1530.00px;">false</div>
<div class="t" style="top:1457.47px;font-size:22px;color:#333;right:687.20px;">$150K</div>
<div class="t" style="top:1456.71px;font-size:22.9px;color:#fff;left:1896.60px;">Implemented - check overdue</div>
<div class="t" style="top:1456.71px;font-size:22.9px;color:#333;left:2332.50px;">No change</div>
<div class="t" style="top:1512.21px;font-size:22.9px;color:#333;left:667.40px;">No entry with flammable liquids rule</div>
<div class="t" style="top:1512.21px;font-size:22.9px;color:#333;left:1313.00px;">Control</div>
<div class="t" style="top:1512.21px;font-size:22.9px;color:#fff;left:1530.00px;">true</div>
<div class="t" style="top:1512.97px;font-size:22px;color:#333;right:687.20px;">$0</div>
<div class="t" style="top:1512.21px;font-size:22.9px;color:#fff;left:1896.60px;">Implemented - check overdue</div>
<div class="t" style="top:1512.21px;font-size:22.9px;color:#333;left:2332.50px;">No change</div>
<div class="a" style="left:2537px;top:131px;width:22px;height:1397px;background:#f1f1f1;"></div>
<div class="a" style="left:2538px;top:156px;width:21px;height:792px;background:#c1c1c1;"></div>
<svg class="a" style="left:2537px;top:131px" width="22" height="1397"><path d="M6 16 L17 16 L11.5 10 Z" fill="#a3a3a3"/><path d="M6 1381 L17 1381 L11.5 1387 Z" fill="#a3a3a3"/></svg>
<div class="a" style="left:0px;top:1528px;width:2559px;height:2px;background:#b1b8c1;"></div>
</body></html>
